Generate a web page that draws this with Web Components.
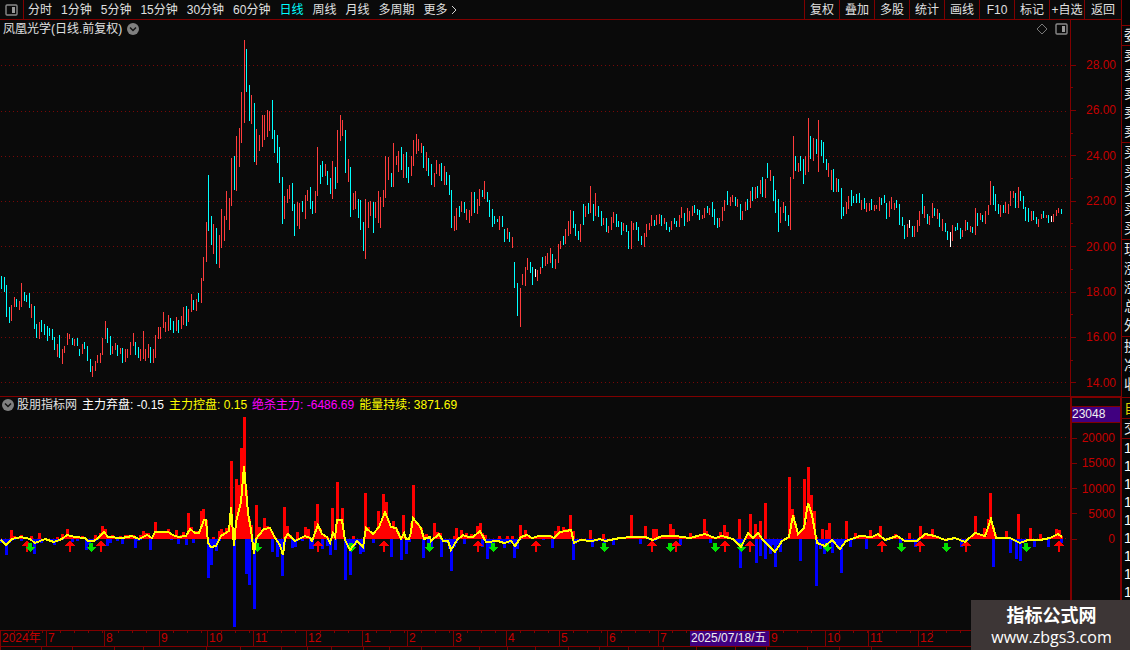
<!DOCTYPE html>
<html lang="zh-CN">
<head>
<meta charset="utf-8">
<title>凤凰光学 日线</title>
<style>
:root {
	--bg: #0a0a0a;
	--line: #800000;
	--label: #c40000;
	--cyan: #00ffff;
}
body {
	margin: 0;
	height: 100vh;
	overflow: hidden;
	background: var(--bg);
	color: #e0e0e0;
	font: 12px/16px "Liberation Sans", "Noto Sans CJK SC", sans-serif;
}
</style>
</head>
<body>
<quote-terminal>
	<tool-bar></tool-bar>
	<price-pane></price-pane>
	<indicator-pane></indicator-pane>
	<time-axis></time-axis>
	<tab-strip></tab-strip>
	<side-strip slot="side"></side-strip>
	<site-mark slot="mark"></site-mark>
</quote-terminal>

<script>
// Candles: colour letter, x, high, low
const CANDLES = `
c1 276 289,c4 277 292,c6 285 317,c9 307 323,r11 305 321,r14 297 307,c16 299 307,r19 301 310,r21 283 307,c24 292 301,
c26 295 302,c29 293 308,r31 304 318,c34 306 329,c36 324 338,r39 322 339,c41 320 332,c44 324 335,c47 326 341,c49 328 336,
c52 329 340,c54 337 350,r57 344 357,c59 335 358,r62 349 364,r64 346 353,r67 333 345,r69 334 339,c72 338 345,r74 339 346,
c77 338 346,c79 349 356,r82 344 354,c84 342 349,c87 346 361,c90 359 372,r92 366 377,r95 361 371,r97 355 363,r100 353 363,
r102 338 355,r105 321 339,c107 328 343,c110 336 355,r112 346 354,r115 343 350,c117 345 356,r120 348 354,c122 348 363,r125 349 362,
r127 349 358,r130 342 355,r133 333 346,c135 342 355,c138 347 358,r140 349 361,r143 331 359,r145 349 361,r148 344 358,c150 347 363,
r153 349 363,r155 335 358,r158 327 339,r160 327 339,r163 312 328,r165 322 332,r168 315 331,c170 318 330,c173 321 333,r176 317 331,
c178 320 333,r181 316 329,r183 307 325,c186 306 326,r188 309 322,r191 294 312,c193 300 310,r196 299 311,c198 293 302,r201 278 303,
r203 257 281,r206 222 262,c208 175 231,c211 216 245,r213 224 254,c216 228 264,r219 235 268,r221 209 248,r224 216 241,r226 191 220,
r229 198 230,r231 158 206,c234 156 190,r236 136 191,r239 128 167,r241 92 143,r244 40 123,c246 49 92,c249 85 121,r251 95 124,
c254 103 162,r256 129 165,r259 135 151,r262 115 147,r264 115 140,r267 110 137,r269 111 131,c272 100 139,c274 130 153,c277 135 163,
c279 147 183,c282 177 224,r284 196 219,r287 189 203,r289 185 199,c292 183 211,c294 204 236,r297 202 226,r299 203 229,c302 201 212,
r305 195 219,r307 190 201,c310 187 209,c312 201 214,r315 191 213,r317 147 196,c320 165 184,c322 161 177,r325 164 176,c327 171 185,
c330 178 194,r332 161 199,c335 167 189,r337 130 183,r340 115 141,r342 120 136,c345 130 173,r348 159 182,c350 167 217,r353 193 210,
r355 191 209,c358 199 218,c360 200 230,c363 222 251,r365 199 259,r368 202 228,r370 201 216,c373 202 233,r375 202 218,r378 191 223,
r380 197 228,r383 190 207,r385 156 198,r388 157 180,c391 173 187,r393 143 187,r396 156 165,r398 151 172,c401 147 170,r403 154 178,
c406 152 178,c408 167 183,r411 156 176,r413 140 166,r416 134 154,r418 139 151,r421 143 153,c423 146 168,r426 152 171,c428 158 176,
c431 164 185,r434 173 187,r436 160 174,r439 164 176,c441 163 181,r444 166 185,c446 172 185,c449 175 195,c451 190 228,r454 216 231,
r456 208 230,c459 206 217,r461 201 212,c464 202 213,r466 209 220,r469 210 223,r471 192 216,c474 192 213,r477 199 214,r479 189 206,
c482 190 197,r484 181 199,c487 192 202,c489 200 217,c492 209 227,c494 216 224,c497 219 222,r499 216 230,c502 216 227,c504 229 242,
r507 228 239,c509 232 242,r512 237 248,c514 262 288,c517 283 316,r520 288 327,r522 274 285,r525 267 286,r527 258 270,c530 262 273,
c532 267 285,w535 269 277,r537 270 281,r540 267 274,c542 257 268,r545 256 266,r547 253 264,r550 248 263,c552 254 268,r555 259 269,
r558 244 263,r560 241 249,c563 236 245,r565 229 244,r568 221 236,r570 210 234,c573 211 228,c575 224 236,c578 231 240,r580 224 242,
c583 204 225,r585 206 217,c588 203 214,r590 186 213,c593 204 221,r595 193 216,c598 206 217,c601 211 226,r603 218 225,c606 218 232,
r608 226 233,r611 217 230,r613 212 223,c616 214 227,c618 221 227,c621 222 235,r623 223 231,c626 225 232,c628 231 249,r631 221 249,
r633 223 230,c636 222 230,c638 227 241,c641 236 245,r644 233 247,r646 224 237,r649 223 230,r651 215 226,c654 220 226,r656 215 225,
r659 214 224,c661 215 226,r664 218 224,c666 222 230,c669 227 232,r671 221 230,c674 218 224,c676 221 227,r679 215 227,r681 207 218,
c684 213 226,r687 208 222,r689 211 221,r692 206 216,c694 205 213,c697 209 215,c699 210 220,r702 215 219,r704 208 218,c707 206 213,
r709 208 215,c712 202 217,c714 209 225,c717 218 228,r719 218 227,r722 207 221,r724 200 211,c727 191 205,r730 197 206,r732 195 202,
c735 197 206,r737 199 207,c740 204 220,r742 211 220,r745 202 211,c747 199 210,r750 191 208,c752 187 201,r755 187 199,c757 186 198,
r760 180 194,c762 177 197,r765 179 198,c767 163 178,r770 170 181,c773 176 201,c775 190 213,c778 199 232,r780 207 223,r783 202 213,
c785 206 221,c788 215 226,r790 177 230,r793 136 179,c795 156 171,r798 163 172,c800 156 171,c803 159 184,r805 156 175,r808 118 172,
c810 136 159,r813 138 161,c816 139 154,r818 120 172,c821 140 156,c823 142 163,c826 159 170,r828 163 177,r831 170 190,c833 169 192,
r836 178 192,c838 179 192,c841 188 219,c843 207 216,r846 202 214,r848 196 209,c851 190 206,c853 196 203,c856 194 203,c859 193 203,
r861 200 210,c864 198 209,r866 203 212,r869 203 211,c871 199 210,r874 205 211,r876 205 209,r879 197 211,c881 198 205,c884 195 203,
c886 203 219,r889 201 217,r891 197 209,r894 203 210,c896 200 208,c899 204 225,c902 217 226,c904 225 239,r907 224 237,w909 220 228,
c912 226 237,r914 226 237,r917 220 232,r919 211 226,c922 194 214,r924 206 218,c927 214 224,r929 216 225,r932 203 218,c934 208 216,
r937 209 219,c939 213 227,r942 219 231,c945 223 232,c947 231 240,w950 232 247,r952 225 241,c955 227 231,c957 223 230,c960 228 239,
r962 230 237,r965 220 231,c967 222 230,r970 226 232,c972 227 233,r975 208 235,c977 213 226,r980 213 220,c982 215 222,r985 211 224,
r988 205 215,r990 181 205,c993 186 205,c995 194 211,c998 204 214,r1000 205 217,c1003 205 213,r1005 202 213,r1008 204 214,r1010 191 206,
r1013 191 198,c1015 193 208,r1018 187 208,c1020 191 201,c1023 196 209,c1025 207 221,c1028 208 222,r1031 211 221,c1033 211 220,c1036 217 224,
r1038 219 227,r1041 214 219,c1043 211 218,r1046 215 218,c1048 215 223,w1051 216 222,r1053 214 222,r1056 210 216,r1058 208 213,c1061 209 214`;

// Histogram: x and height, above and below the zero line
const BARS_UP = `11 9,14 3,21 4,31 3,39 6,57 2,62 5,67 10,82 3,95 4,100 6,102 13,105 10,112 4,120 3,125 4,128 4,131 4,133 4,140 4,143 8,146 6,148 6,
155 17,157 7,160 7,163 8,166 7,168 10,171 5,176 9,181 4,183 7,188 26,191 12,193 5,196 8,201 28,203 30,206 19,213 2,219 8,221 10,224 7,226 11,229 13,
231 78,236 60,239 54,241 91,244 122,251 14,256 34,259 12,262 8,264 21,267 13,270 8,284 32,287 13,290 4,297 7,305 12,308 10,315 18,317 35,320 10,323 4,
332 31,337 57,340 5,342 31,353 3,365 46,368 12,371 3,374 4,376 9,378 28,381 17,383 45,386 37,388 6,391 10,393 18,396 11,399 4,403 24,411 16,413 54,416 3,418 8,
421 10,426 5,434 16,437 7,440 6,454 3,456 11,461 9,466 6,471 5,477 13,480 16,482 6,485 4,499 3,507 3,512 3,520 14,525 9,528 4,538 4,541 4,545 4,550 4,
555 8,558 13,560 8,563 12,566 10,570 24,573 8,590 9,603 5,631 24,645 13,653 10,656 10,670 15,673 10,690 6,704 20,706 8,720 7,724 14,727 7,
739 20,750 25,755 15,760 18,765 36,789 62,792 30,794 15,804 60,808 72,811 44,814 28,822 10,826 9,829 16,846 18,855 6,870 9,880 13,895 5,909 6,
920 13,932 10,975 23,984 11,988 20,990 46,1006 8,1018 25,1030 11,1040 5,1056 10,1059 9`;
const BARS_DOWN = `1 4,6 16,21 2,34 15,41 4,54 6,72 3,77 2,86 11,89 6,107 7,110 4,117 2,122 5,135 9,138 2,150 11,171 1,178 5,186 6,193 4,208 39,211 26,216 12,
234 88,246 35,249 46,254 70,272 13,277 18,280 10,282 37,292 9,295 8,302 2,310 10,312 10,322 10,327 7,330 16,335 11,345 41,350 36,353 8,360 15,363 13,373 4,
391 18,401 21,406 15,409 3,423 19,428 5,431 8,441 18,446 4,449 10,451 32,454 8,464 5,482 8,487 20,490 10,493 7,504 9,509 5,514 19,517 10,543 1,552 9,
573 21,592 8,604 9,613 6,640 5,680 6,710 4,740 29,756 24,760 17,765 20,770 15,775 28,780 13,800 22,816 47,820 10,824 15,832 14,838 10,841 34,850 8,866 10,900 10,
915 8,961 8,993 28,1010 14,1016 20,1020 22,1034 8,1048 8,1061 4`;
const ENERGY = `1,540 6,545 12,539 21,537 30,539 35,543 45,539 54,542 62,539 67,535 75,537 85,538 88,541 94,541 98,538 104,532 108,537 122,538
132,536 139,539 147,535 152,538 155,532 168,532 173,535 178,537 186,536 190,529 195,533 199,533 204,520 206,520 208,543 211,547 216,546 221,536 229,531
231,507 234,546 236,522 241,502 244,466 248,513 251,530 254,554 256,539 264,529 270,528 275,538 280,545 283,555 285,538 288,534 295,541 305,536
310,538 312,541 318,525 322,534 327,537 330,543 333,533 335,537 337,520 342,520 345,540 350,550 357,541 363,547 366,528 373,534 379,527 385,512
391,527 396,528 401,539 404,533 406,539 409,539 411,532 413,518 421,528 424,539 430,537 431,541 439,534 443,541 448,541 451,550 457,540 463,535 468,537
473,537 480,531 486,542 498,541 504,543 511,541 515,546 521,537 527,535 532,538 539,536 550,536 554,538 560,532 566,531 571,530 574,543 580,540
592,541 600,539 605,541 620,538 632,537 645,537 653,540 662,536 675,536 690,538 705,534 715,538 722,536 733,539 741,547 748,533 753,538 758,533
763,540 768,545 775,552 782,541 789,537 793,515 798,534 804,528 808,503 812,515 817,543 825,546 832,540 840,549 846,541 860,536 872,537 878,534
885,540 897,536 905,541 917,541 925,534 935,536 945,540 955,538 965,542 975,533 985,536 991,519 996,538 1010,538 1020,543 1028,540 1040,540 1050,538 1058,534 1062,537`;
const BUY = [27, 70, 101, 318, 384, 478, 536, 652, 676, 725, 750, 882, 920, 966, 1059];
const SELL = [30, 91, 257, 351, 429, 493, 604, 670, 715, 741, 827, 901, 946, 1026];
const ZERO = 539;

const panelIcon = `<svg width="13" height="12" viewBox="0 0 13 12" aria-hidden="true">
	<rect x="1" y="1" width="11" height="10" rx="1" fill="none" stroke="#8a8a8a" stroke-width="1.4"/>
	<rect x="7" y="3" width="3" height="6" fill="#9a9a9a"/>
</svg>`;
const chevronIcon = `<svg width="12" height="12" viewBox="0 0 12 12" aria-hidden="true">
	<circle cx="6" cy="6" r="6" fill="#808080"/>
	<path d="M3 4.5 6 7.5 9 4.5" fill="none" stroke="#141414" stroke-width="1.5"/>
</svg>`;

const resetButton = `
button {
	margin: 0;
	padding: 0;
	border: 0;
	background: none;
	color: inherit;
	font: inherit;
	white-space: nowrap;
	cursor: pointer;
}
svg { display: block; }`;

// Dotted horizontal grid lines
const grid = ys => ys.map(y =>
	`<line x1="1" x2="1066" y1="${y + 0.5}" y2="${y + 0.5}" stroke="#780808" stroke-dasharray="1 3"/>`).join('');

function define(name, html) {
	const template = document.createElement('template');
	template.innerHTML = html;
	customElements.define(name, class extends HTMLElement {
		constructor() {
			super();
			this.attachShadow({ mode: 'open' });
			this.shadowRoot.appendChild(template.content.cloneNode(true));
		}
	});
}

define('quote-terminal', `
<style>
:host { display: flex; height: 100%; position: relative; }
main { flex: 1; min-width: 0; display: flex; flex-direction: column; }
</style>
<main><slot></slot></main>
<slot name="side"></slot>
<slot name="mark"></slot>`);

const periods = ['分时', '1分钟', '5分钟', '15分钟', '30分钟', '60分钟', '日线', '周线', '月线', '多周期'];
const tools = ['复权', '叠加', '多股', '统计', '画线', 'F10', '标记', '+自选', '返回'];

define('tool-bar', `
<style>
${resetButton}
:host {
	display: flex;
	justify-content: space-between;
	flex: none;
	height: 19px;
	border-bottom: 1px solid var(--line);
}
.layout { width: 24px; padding-left: 5px; border-right: 1px solid var(--line); box-sizing: border-box; }
nav { display: flex; }
.periods { gap: 9px; }
.layout + button { margin-left: -5px; }
.on { color: var(--cyan); }
.more { display: flex; align-items: center; gap: 2px; }
.tools button { width: 35px; border-left: 1px solid var(--line); }
.tools button:last-child { width: 37px; }
</style>
<nav class="periods">
	<button class="layout" aria-label="布局">${panelIcon}</button>
	${periods.map(p => `<button${p === '日线' ? ' class="on"' : ''}>${p}</button>`).join('')}
	<button class="more">更多<svg width="8" height="10" viewBox="0 0 8 10"><path d="M2 1 6 5 2 9" fill="none" stroke="#d0d0d0"/></svg></button>
</nav>
<nav class="tools">${tools.map(t => `<button>${t}</button>`).join('')}</nav>`);

const candles = CANDLES.trim().split(/,\s*/).map(s => {
	const [, kind, x, top, bottom] = s.match(/([crw])(\d+) (\d+) (\d+)/);
	return { kind, x: +x, top: +top, bottom: +bottom };
});
const candleFill = { c: '#00ffff', r: '#ff3c3c', w: '#ffffff' };

define('price-pane', `
<style>
${resetButton}
:host { display: flex; flex: 376 1 0; min-height: 0; border-bottom: 1px solid var(--line); }
section { flex: 1; min-width: 0; display: flex; flex-direction: column; }
header { display: flex; align-items: center; gap: 5px; height: 18px; flex: none; padding: 0 2px 0 3px; }
h1 { margin: 0; font: inherit; }
.right { display: flex; gap: 7px; margin-left: auto; }
.plot { flex: 1; min-height: 0; width: 100%; }
</style>
<section>
	<header>
		<h1>凤凰光学(日线.前复权)</h1>
		<button aria-label="展开">${chevronIcon}</button>
		<div class="right">
			<button aria-label="标记点"><svg width="12" height="12" viewBox="0 0 12 12"><path d="M6 1 11 6 6 11 1 6Z" fill="none" stroke="#777"/></svg></button>
			<button aria-label="侧栏">${panelIcon}</button>
		</div>
	</header>
	<svg class="plot" viewBox="0 38 1070 358" preserveAspectRatio="none" shape-rendering="crispEdges">
		${grid([65, 111, 156, 201, 246, 292, 337, 382])}
		${candles.map(c => `<rect x="${c.x}" y="${c.top}" width="1" height="${c.bottom - c.top}" fill="${candleFill[c.kind]}"/>`).join('')}
	</svg>
</section>
<value-axis labels="28.00 26.00 24.00 22.00 20.00 18.00 16.00 14.00" minor></value-axis>`);

customElements.define('value-axis', class extends HTMLElement {
	connectedCallback() {
		if (this.shadowRoot) return;
		this.attachShadow({ mode: 'open' });
		const minor = this.hasAttribute('minor') ? '<i></i>' : '';
		const rows = this.getAttribute('labels').split(' ').map(t => `<div>${t}</div>`).join(minor);
		this.shadowRoot.innerHTML = `
<style>
:host {
	flex: none;
	width: 51px;
	box-sizing: border-box;
	display: flex;
	flex-direction: column;
	justify-content: space-between;
	padding: 37px 0 5px;
	border-left: 1px solid var(--line);
	color: var(--label);
}
div { display: flex; align-items: center; justify-content: space-between; padding-right: 5px; }
div::before, i { content: ""; width: 5px; height: 1px; background: var(--line); }
i { width: 2px; }
</style>${rows}`;
	}
});

const bars = (data, fill, dir) => data.trim().split(/,\s*/).map(s => {
	const [x, h] = s.split(' ').map(Number);
	return `<rect x="${x - 1}" y="${dir > 0 ? ZERO - h : ZERO}" width="3" height="${h}" fill="${fill}"/>`;
}).join('');

// Small bars between zero and the energy line, one for each candle
const energy = ENERGY.split(/\s+/).map(p => p.split(',').map(Number));
const baseBars = candles.map(({ x }) => {
	const i = Math.max(1, energy.findIndex(p => p[0] >= x));
	const [x0, y0] = energy[i - 1];
	const [x1, y1] = energy[i];
	const y = Math.round(y0 + (y1 - y0) * (x - x0) / (x1 - x0));
	return y < ZERO
		? `<rect x="${x - 1}" y="${y}" width="3" height="${ZERO - y}" fill="#ff0000"/>`
		: `<rect x="${x - 1}" y="${ZERO}" width="3" height="${Math.min(y - ZERO + 1, 6)}" fill="#0000ff"/>`;
}).join('');

define('indicator-pane', `
<style>
${resetButton}
:host { display: flex; flex: 233 1 0; min-height: 0; }
section { flex: 1; min-width: 0; display: flex; flex-direction: column; }
header { display: flex; align-items: center; gap: 5px; height: 16px; flex: none; padding-left: 2px; }
header button { margin-right: -2px; }
.white { color: #fff; }
.yellow { color: #ffff00; }
.magenta { color: #ff00ff; }
.plot { flex: 1; min-height: 0; width: 100%; }
aside {
	flex: none;
	width: 51px;
	box-sizing: border-box;
	display: flex;
	flex-direction: column;
	border: solid var(--line);
	border-width: 1px 1px 0 2px;
}
output {
	display: block;
	margin-top: 8px;
	height: 15px;
	border: solid var(--line);
	border-width: 1px 0;
	background: #400080;
	color: #f0f0f0;
	line-height: 15px;
}
value-axis { width: auto; height: 124px; padding: 7px 0 0; border: 0; }
</style>
<section>
	<header>
		<button aria-label="展开">${chevronIcon}</button>
		<span>股朋指标网</span>
		<span class="white">主力弃盘: -0.15</span>
		<span class="yellow">主力控盘: 0.15</span>
		<span class="magenta">绝杀主力: -6486.69</span>
		<span class="yellow">能量持续: 3871.69</span>
	</header>
	<svg class="plot" viewBox="0 413 1070 217" preserveAspectRatio="none" shape-rendering="crispEdges">
		${grid([437, 487, 538])}
		${baseBars}
		${bars(BARS_UP, '#ff0000', 1)}
		${bars(BARS_DOWN, '#0000ff', -1)}
		${BUY.map(x => `<path d="M${x} 540 l5 6h-4v6h-2v-6h-4z" fill="#ff0000"/>`).join('')}
		${SELL.map(x => `<path d="M${x} 552 l-5 -5h3v-4h4v4h3z" fill="#00e000"/>`).join('')}
		<polyline points="${ENERGY}" fill="none" stroke="#ffff00" stroke-width="2"/>
	</svg>
</section>
<aside>
	<output>23048</output>
	<value-axis labels="20000 15000 10000 5000 0"></value-axis>
</aside>`);

// Month cells, each with its share of the width
const months = [['2024年', 46], ['7', 58], ['8', 55], ['9', 48], ['10', 46], ['11', 53], ['12', 56], ['1', 45], ['2', 46],
	['3', 53], ['4', 53], ['5', 48], ['6', 51], ['7', 32], ['2025/07/18/五', 79], ['9', 56], ['10', 43], ['11', 50], ['12', 203]];
const columns = widths => widths.map(w => `minmax(0, ${w}fr)`).join(' ');

define('time-axis', `
<style>
:host {
	display: grid;
	grid-template-columns: ${columns(months.map(m => m[1]))};
	flex: none;
	height: 15px;
	border: solid var(--line);
	border-width: 1px 0;
	color: var(--label);
	line-height: 15px;
}
div {
	padding-left: 1px;
	border-left: 1px solid var(--line);
	white-space: nowrap;
	background: linear-gradient(to left, var(--line) 1px, transparent 1px) 0 0 / 14px 2px repeat-x;
}
div:first-child { border-left: 0; background: none; }
.cursor { background: #400080; color: #f0f0f0; border: 0; }
</style>
${months.map(([m]) => `<div${m.length > 6 ? ' class="cursor"' : ''}>${m}</div>`).join('')}`);

const tabs = [41, 31, 42, 29, 63, 34, 41, 26, 24, 32, 26, 32, 58, 28, 28, 32, 31, 29, 35, 33, 39, 31, 41, 32, 32, 250];

define('tab-strip', `
<style>
:host { display: grid; grid-template-columns: ${columns(tabs)}; flex: none; height: 3px; }
div { border-left: 1px solid var(--line); }
</style>
${tabs.map(() => '<div></div>').join('')}`);

define('side-strip', `
<style>
:host {
	flex: none;
	width: 8px;
	overflow: hidden;
	border-left: 1px solid var(--line);
	padding-top: 25px;
	background: #050505;
	color: #e8e8e8;
	font-size: 14px;
	line-height: 19px;
}
div { border-top: 1px solid var(--line); padding-left: 2px; }
.five { padding-bottom: 1px; }
.three { padding-bottom: 3px; }
.yellow { color: #e0d000; line-height: 20px; }
.ticks { line-height: 18px; color: #fff; }
p { margin: 0; width: 14px; }
</style>
<div><p>委</p></div>
<div class="five">${'<p>卖</p>'.repeat(5)}</div>
<div class="five">${'<p>买</p>'.repeat(5)}</div>
<div class="five"><p>现</p><p>涨</p><p>涨</p><p>总</p><p>外</p></div>
<div class="three"><p>换</p><p>净</p><p>收</p></div>
<div class="yellow"><p>自</p></div>
<div><p>交</p></div>
<div class="ticks">${'<p>1</p>'.repeat(9)}</div>`);

define('site-mark', `
<style>
:host {
	position: absolute;
	right: 0;
	bottom: 0;
	width: 157px;
	height: 50px;
	padding-left: 2px;
	background: #3d3636;
	color: #fff;
	text-align: center;
}
strong { display: block; padding-top: 2px; font: bold 18px/25px "Noto Sans CJK SC", sans-serif; }
a { display: block; color: inherit; text-decoration: none; font: 16px/20px "Open Sans", sans-serif; }
</style>
<strong>指标公式网</strong>
<a href="#">www.zbgs3.com</a>`);
</script>
</body>
</html>
